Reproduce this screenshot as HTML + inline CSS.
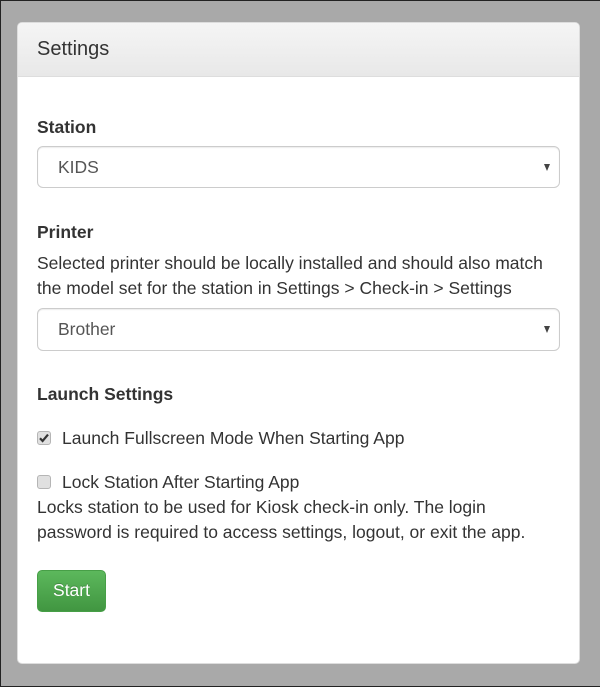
<!DOCTYPE html>
<html>
<head>
<meta charset="utf-8">
<style>
html,body{margin:0;padding:0;}
body{position:relative;width:600px;height:687px;overflow:hidden;background:#a9a9a9;font-family:"Liberation Sans",Arial,sans-serif;color:#333;}
.abs{position:absolute;white-space:nowrap;}
#edgeT{left:0;top:0;width:600px;height:1px;background:#222;}
#edgeL{left:0;top:0;width:1px;height:687px;background:#222;}
#edgeB{left:0;top:686px;width:600px;height:1px;background:#222;}
#panel{left:17px;top:22px;width:561px;height:640px;background:#fff;border:1px solid #ddd;border-radius:5px;}
#head{left:18px;top:23px;width:561px;height:53px;background:linear-gradient(#f5f5f5,#e8e8e8);border-bottom:1px solid #ddd;border-radius:4px 4px 0 0;}
.t{font-size:17.5px;line-height:24px;color:#333;}
.b{font-weight:bold;}
.sel{left:37px;width:521px;background:#fff;border:1px solid #ccc;border-radius:6px;box-shadow:inset 0 1px 1px rgba(0,0,0,.075);}
.val{font-size:17.5px;line-height:24px;color:#555;}
.arrow{width:0;height:0;border-left:3.5px solid transparent;border-right:3.5px solid transparent;border-top:7px solid #444;}
.cb{left:37px;width:12px;height:12px;background:#e0e0e0;border:1px solid #b5b5b5;border-radius:3px;}
#btn{left:37px;top:570px;width:67px;height:40px;border:1px solid #479f47;border-radius:5px;background:linear-gradient(#5cb85c,#419641);color:#fff;font-size:17.5px;line-height:38px;text-align:center;text-shadow:0 -1px 0 rgba(0,0,0,.2);}
</style>
</head>
<body>
<div class="abs" id="edgeT"></div>
<div class="abs" id="edgeL"></div>
<div class="abs" id="edgeB"></div>
<div class="abs" id="panel"></div>
<div class="abs" id="head"></div>
<div class="abs" style="left:37px;top:36px;font-size:20px;line-height:26px;color:#333;">Settings</div>

<div class="abs t b" style="left:37px;top:115px;">Station</div>
<div class="abs sel" style="top:146px;height:40px;"></div>
<div class="abs val" style="left:58px;top:155px;">KIDS</div>
<div class="abs arrow" style="left:544px;top:164px;"></div>

<div class="abs t b" style="left:37px;top:220px;">Printer</div>
<div class="abs t" style="left:37px;top:251px;">Selected printer should be locally installed and should also match</div>
<div class="abs t" style="left:37px;top:276px;">the model set for the station in Settings &gt; Check-in &gt; Settings</div>
<div class="abs sel" style="top:308px;height:41px;"></div>
<div class="abs val" style="left:58px;top:317px;">Brother</div>
<div class="abs arrow" style="left:544px;top:326px;"></div>

<div class="abs t b" style="left:37px;top:382px;">Launch Settings</div>

<div class="abs cb" style="top:431px;"></div>
<svg class="abs" style="left:37px;top:431px;" width="14" height="14" viewBox="0 0 14 14"><path d="M3 7.2 L5.6 10 L11 3.6" fill="none" stroke="#333" stroke-width="2.2"/></svg>
<div class="abs t" style="left:62px;top:426px;">Launch Fullscreen Mode When Starting App</div>

<div class="abs cb" style="top:475px;"></div>
<div class="abs t" style="left:62px;top:470px;">Lock Station After Starting App</div>
<div class="abs t" style="left:37px;top:495px;">Locks station to be used for Kiosk check-in only. The login</div>
<div class="abs t" style="left:37px;top:520px;">password is required to access settings, logout, or exit the app.</div>

<div class="abs" id="btn">Start</div>
</body>
</html>
